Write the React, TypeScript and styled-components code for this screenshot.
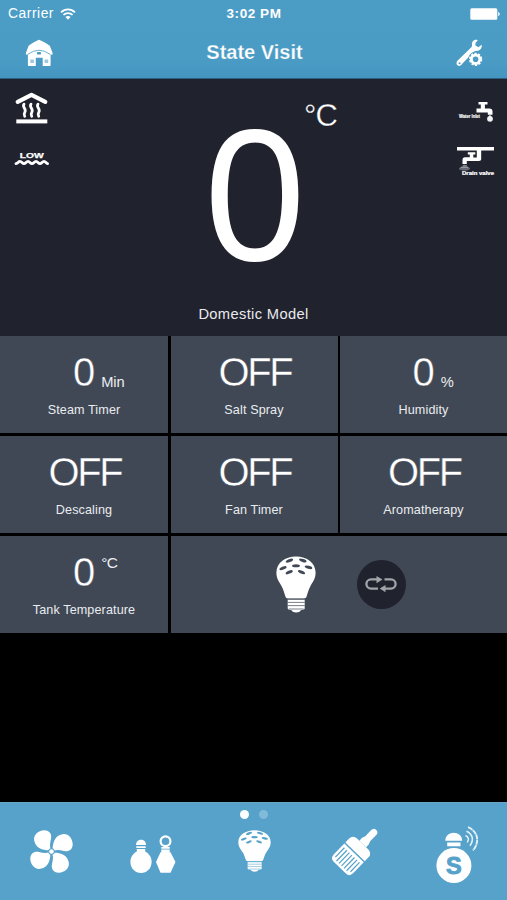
import React from 'react';
import styled, { createGlobalStyle } from 'styled-components';

const GlobalStyle = createGlobalStyle`
  * { box-sizing: border-box; }
  body {
    margin: 0;
    background: #000;
    color: #fff;
    font-family: "Liberation Sans", Arial, sans-serif;
  }
`;

const Screen = styled.div`
  width: 507px;
  height: 900px;
  display: flex;
  flex-direction: column;
  overflow: hidden;
  background: #000;
`;

const Header = styled.header`
  height: 79px;
  flex: none;
  background: linear-gradient(#4c9dc6 0%, #4b9cc5 75%, #4495c0 100%);
  border-bottom: 1px solid #2c5f80;
`;

const StatusBar = styled.div`
  height: 27px;
  display: grid;
  grid-template-columns: 1fr auto 1fr;
  align-items: center;
  padding: 0 7px 0 8px;
  font-size: 13.8px;
`;

const Carrier = styled.div`
  display: flex;
  align-items: center;
  gap: 6px;
  letter-spacing: 0.55px;
`;

const Clock = styled.div`
  font-weight: bold;
  font-size: 13.5px;
  letter-spacing: 0.55px;
`;

const BatterySlot = styled.div`
  display: flex;
  justify-content: flex-end;
`;

const NavBar = styled.nav`
  height: 51px;
  display: grid;
  grid-template-columns: 1fr auto 1fr;
  align-items: center;
  padding: 0 23px 0 25px;
`;

const Title = styled.h1`
  margin: -2px 0 0;
  font-size: 20px;
  line-height: 24px;
  font-weight: bold;
  letter-spacing: 0;
  -webkit-text-stroke: 0.25px #4b9cc5;
`;

const NavRight = styled.div`
  display: flex;
  justify-content: flex-end;
`;

const Icon = styled.svg`
  display: block;
  flex: none;
  overflow: visible;
`;

const Hero = styled.section`
  height: 256.5px;
  flex: none;
  display: grid;
  grid-template-columns: 60px 1fr 60px;
  background: #20222d;
`;

const IconColumn = styled.div<{ $right?: boolean }>`
  display: flex;
  flex-direction: column;
  align-items: ${(p) => (p.$right ? 'flex-end' : 'flex-start')};
  padding: ${(p) => (p.$right ? '22px 12px 0 0' : '14px 0 0 14px')};
  gap: ${(p) => (p.$right ? '23px' : '26px')};
`;

const Reading = styled.div`
  display: flex;
  flex-direction: column;
  align-items: center;
`;

const ReadingRow = styled.div`
  height: 212px;
  display: grid;
  grid-template-columns: 1fr auto 1fr;
  margin-top: 11px;
`;

const BigValue = styled.div`
  grid-column: 2;
  font-size: 187px;
  line-height: 212px;
  transform: translateX(2px) scaleX(0.97);
`;

const BigUnit = styled.div`
  font-size: 31px;
  line-height: 34px;
  padding-top: 9px;
  letter-spacing: -0.8px;
  transform: translateX(-1.5px);
  -webkit-text-stroke: 0.3px #20222d;
`;

const ModelName = styled.div`
  font-size: 14.7px;
  line-height: 20px;
  letter-spacing: 0.35px;
  margin-top: 2px;
  color: #e8eaed;
`;

const Tiles = styled.section`
  flex: none;
  display: grid;
  grid-template-columns: 168px 167px 167px;
  grid-template-rows: repeat(3, 97.5px);
  gap: 2.5px;
`;

const Tile = styled.div<{ $wide?: boolean }>`
  grid-column: ${(p) => (p.$wide ? 'span 2' : 'auto')};
  display: flex;
  flex-direction: ${(p) => (p.$wide ? 'row' : 'column')};
  align-items: center;
  padding: ${(p) => (p.$wide ? '0 0 0 105px' : '14px 0 0')};
  gap: ${(p) => (p.$wide ? '41px' : '6px')};
  background: #404855;
`;

const ValueRow = styled.div`
  width: 100%;
  height: 46px;
  display: grid;
  grid-template-columns: 1fr auto 1fr;
`;

const Value = styled.div<{ $word?: boolean }>`
  grid-column: 2;
  font-size: 40px;
  line-height: 45px;
  letter-spacing: ${(p) => (p.$word ? '-2.4px' : '0')};
  margin-right: ${(p) => (p.$word ? '-2px' : '0')};
  -webkit-text-stroke: 0.4px #404855;
`;

const Unit = styled.div<{ $raised?: boolean }>`
  align-self: ${(p) => (p.$raised ? 'start' : 'end')};
  padding: ${(p) => (p.$raised ? '4px 0 0 6px' : '0 0 5px 6px')};
  font-size: ${(p) => (p.$raised ? '15.5px' : '14.7px')};
  line-height: 18px;
  letter-spacing: ${(p) => (p.$raised ? '-0.5px' : '0')};
  color: #eceef1;
`;

const Label = styled.div`
  font-size: 12.6px;
  line-height: 16px;
  letter-spacing: 0.12px;
  color: #eaecef;
`;

const RoundButton = styled.button`
  width: 49px;
  height: 49px;
  padding: 0;
  border: 0;
  border-radius: 50%;
  background: #20222d;
  display: flex;
  align-items: center;
  justify-content: center;
`;

const TabBar = styled.footer`
  height: 98px;
  flex: none;
  margin-top: auto;
  background: #56a2ca;
  border-top: 1px solid #6aa5c4;
`;

const Pager = styled.div`
  height: 23px;
  display: flex;
  justify-content: center;
  align-items: center;
  gap: 10px;
`;

const Dot = styled.span<{ $active?: boolean }>`
  width: 9px;
  height: 9px;
  border-radius: 50%;
  background: ${(p) => (p.$active ? '#fff' : '#82bad9')};
`;

const Tabs = styled.div`
  display: grid;
  grid-template-columns: repeat(5, 101.4px);
  height: 62px;
`;

const Tab = styled.div<{ $top: number; $shift?: number }>`
  display: flex;
  justify-content: center;
  align-items: flex-start;
  padding-top: ${(p) => p.$top}px;
  padding-left: ${(p) => p.$shift ?? 0}px;
`;

const Wifi = () => (
  <Icon width="16" height="12" viewBox="0 0 16 12" fill="none" stroke="#fff" strokeWidth="1.7">
    <path d="M1 4.3C5 .3 11 .3 15 4.3M3.4 6.900c2.600-2.500 6.600-2.500 9.200 0" />
    <path d="M5.400 9c1.400-1.500 3.800-1.500 5.200 0L8 11.700z" fill="#fff" stroke="none" />
  </Icon>
);

const Battery = () => (
  <Icon width="30" height="12" viewBox="0 0 30 12" fill="#fff">
    <rect x=".3" y=".2" width="27" height="11.6" rx="1.5" />
    <path d="M28.2 4c2 .6 2 3.400 0 4z" />
  </Icon>
);

const House = () => (
  <Icon width="28" height="28" viewBox="0 0 28 28">
    <path
      fill="#fff"
      d="M14 .7c1 0 8.500 4.200 10.800 6L27.600 14v1.500l-2 .3v10.500c0 .4-.2.700-.6.700h-7.300v-8.300h-6.900V27H3.600c-.4 0-.7-.3-.7-.7V15.800l-2-.3V14L3.600 6.700C6 4.900 13 .7 14 .7z"
    />
    <path d="M2.500 15.500 Q8.500 11.300 14 11.200 Q19.500 11.300 25.500 15.500" fill="none" stroke="#4b9cc5" strokeWidth=".8" />
    <rect x="12" y="13" width="4" height="2.600" rx=".8" fill="#4b9cc5" />
    <path d="M5.300 20.500h3.600v3.600H5.300zM19.600 20.500h3.600v3.600h-3.600z" fill="#9dc9e0" />
  </Icon>
);

const Tools = () => (
  <Icon width="28" height="28" viewBox="0 0 28 28">
    <path
      fill="#fff"
      d="M21.800 1.200c-3.300-1.300-6.200 1.300-5.800 4.500.1 1.300-.1 2-.9 2.900L2 21.300c-3 2.400-.9 6.500 2 5.500 1-.3 1.500-.9 2-1.700L17.500 13c.8-.8 1.600-1 2.700-1 3.400.1 6-2.200 5.500-6.200L22.300 8.200 19.300 6.300 19.600 3.700z"
    />
    <circle cx="3.500" cy="24.300" r="1" fill="#4b9cc5" />
    <circle cx="19.600" cy="20.300" r="7.500" fill="#4b9cc5" />
    <circle cx="19.600" cy="20.300" r="4.200" fill="none" stroke="#fff" strokeWidth="2.800" />
    <circle cx="19.600" cy="20.300" r="5.800" fill="none" stroke="#fff" strokeWidth="1.700" strokeDasharray="2.200 1.444" />
  </Icon>
);

const Steam = () => (
  <Icon width="34" height="31" viewBox="0 0 34 31" fill="none" stroke="#fff">
    <path d="M3.700 8.900 17.500 1.900 31.300 8.900" strokeWidth="4.200" strokeLinecap="round" strokeLinejoin="round" />
    <path
      d="M10 11.200c-2.300 2.800 2.800 4.700.9 7.800-.9 1.500-1.200 2.600-.2 4.300M17 11.200c-2.300 2.800 2.800 4.700.9 7.800-.9 1.500-1.200 2.600-.2 4.300M24 11.200c-2.300 2.800 2.800 4.700.9 7.800-.9 1.500-1.200 2.600-.2 4.300"
      strokeWidth="2.800"
      strokeLinecap="round"
    />
    <path d="M4.300 28.400h27" strokeWidth="4" strokeLinecap="square" />
  </Icon>
);

const WaterLow = () => (
  <Icon width="36" height="16" viewBox="0 0 36 16">
    <text x="17.700" y="8" textAnchor="middle" textLength="24" lengthAdjust="spacingAndGlyphs" fontSize="7.500" fontWeight="bold" fill="#fff" stroke="#fff" strokeWidth=".25">
      LOW
    </text>
    <path
      d="M2 13.600c2-.2 2.200-2.200 4-2.200s2.200 2.300 4 2.300 2.200-2.300 4-2.300 2.200 2.300 4 2.300 2.200-2.300 4-2.300 2.200 2.300 4 2.300 2.200-2.300 4-2.300 2 2 3.600 2.200"
      fill="none"
      stroke="#fff"
      strokeWidth="2.800"
      strokeLinecap="round"
    />
  </Icon>
);

const WaterInlet = () => (
  <Icon width="36" height="22" viewBox="0 0 36 22">
    <text x="0" y="17.200" textLength="21" lengthAdjust="spacingAndGlyphs" fontSize="5.800" fontWeight="bold" fill="#fff" stroke="#fff" strokeWidth=".2">
      Water Inlet
    </text>
    <path d="M19.500 1h9v2.600h-2.600V7.500h4.300c2.300 0 3.300 1 3.300 3v3.200h-4.700v-2.200H17.500v-4h4.300V3.600h-2.300z" fill="#fff" />
    <circle cx="31" cy="17.800" r="2.900" fill="#f1f2f4" />
    <path d="M31 13.600l1.700 3h-3.400z" fill="#f1f2f4" />
  </Icon>
);

const DrainValve = () => (
  <Icon width="38" height="31" viewBox="0 0 38 31">
    <path d="M0 1h37v3.600H24.200V12.800c0 1.500-.8 2.200-2.200 2.200H9.800v3H5.500v-4c0-1.600.8-2.700 2.600-2.700h4.700V8.600h-2V6.200h7.500v2.400h-2v2.800h3.500V4.600H0z" fill="#fff" />
    <path d="M7.500 18.400 2 22c-.6 2 3 2.800 6 2.600 3-.1 5.500-1 5-2.600z" fill="#656872" />
    <path d="M4 21.500h7M6 19.800h4" stroke="#a4a6ac" strokeWidth=".8" />
    <text x="5" y="29.300" textLength="32" lengthAdjust="spacingAndGlyphs" fontSize="4.500" fontWeight="bold" fill="#fff" stroke="#fff" strokeWidth=".2">
      Drain valve
    </text>
  </Icon>
);

const Bulb = ({ width, height, cut }: { width: number; height: number; cut: string }) => (
  <Icon width={width} height={height} viewBox="0 0 40 57" preserveAspectRatio="none">
    <path
      fill="#fff"
      d="M20 .5C9 .5.400 7.200.4 16.500c0 6.500 2.800 9 5.600 14.500 1.700 3.500 2.500 6.500 3.400 9.500.4 1.200 1.200 2 2.600 2h16c1.400 0 2.200-.8 2.600-2 .9-3 1.700-6 3.400-9.500 2.800-5.500 5.600-8 5.600-14.500C39.600 7.200 31 .5 20 .5z"
    />
    <path fill="#fff" d="M11.700 43.500h17v9c0 1.200-2.700 1.300-3.900 1.800-.8 1.500-2.200 2.200-4.600 2.200s-3.800-.7-4.600-2.200c-1.200-.5-3.900-.6-3.900-1.800z" />
    <path d="M11.700 43.200h17M11.700 46.400h17M11.700 49.600h17M12.700 53h15" stroke={cut} strokeWidth=".7" />
    <g fill={cut}>
      <ellipse cx="13.400" cy="4.600" rx="3.900" ry="1.500" transform="rotate(-22 13.400 4.600)" />
      <ellipse cx="26.800" cy="4.500" rx="3.900" ry="1.500" transform="rotate(18 26.800 4.500)" />
      <ellipse cx="20" cy="9.700" rx="3.900" ry="1.500" />
      <ellipse cx="7" cy="12.200" rx="3.800" ry="1.500" transform="rotate(-22 7 12.200)" />
      <ellipse cx="32.500" cy="11.300" rx="3.900" ry="1.500" transform="rotate(14 32.500 11.300)" />
      <ellipse cx="13.200" cy="16.200" rx="3.800" ry="1.500" transform="rotate(-24 13.200 16.200)" />
      <ellipse cx="25.500" cy="16.100" rx="3.800" ry="1.500" transform="rotate(24 25.500 16.100)" />
    </g>
  </Icon>
);

const Swap = () => (
  <Icon width="32" height="16" viewBox="0 0 32 16" fill="none" stroke="#a2a4aa" strokeWidth="2.300">
    <path d="M13 12.600H6A4.600 4.600 0 0 1 6 3.400h7M19.500 3.400H26a4.600 4.600 0 0 1 0 9.200h-7" />
    <path d="M11.500 0 17.500 3.600 11.500 7.200zM20.500 9 14.700 12.600 20.500 16.200z" fill="#a2a4aa" stroke="none" />
  </Icon>
);

const Fan = () => {
  const blade =
    'M19.500 20.300C13.500 20.500 5.500 18.500 4.200 10.500C3.300 4.500 8.500 .6 14 .3C20 .2 22 4.700 21 9C20 13 19.500 16.500 20.700 19z';
  return (
    <Icon width="43" height="43" viewBox="0 0 43 43" fill="#fff">
      {[0, 90, 180, 270].map((angle) => (
        <path key={angle} d={blade} transform={`rotate(${angle} 21.500 21.500)`} />
      ))}
      <circle cx="21.500" cy="21.500" r="3.200" fill="#56a2ca" />
      <circle cx="21.500" cy="21.500" r="2.300" />
    </Icon>
  );
};

const Bottles = () => (
  <Icon width="46" height="39" viewBox="0 0 46 39" fill="#fff">
    <path d="M6 6.500C6-.5 16-.5 16 6.500z" transform="translate(0 3.600)" />
    <path d="M6.300 11.200h9.400v1.800H6.300zM6.800 14h8.400v3H6.800z" />
    <ellipse cx="11" cy="26.900" rx="10.600" ry="11.100" />
    <circle cx="35.500" cy="6.300" r="4.900" fill="none" stroke="#fff" strokeWidth="2.200" />
    <path d="M31.300 12h8.400v1.800h-8.400zM31.300 14.600h8.400v2.600h-8.400zM30.500 17.200h10l5 9.800-5 10.700h-10L26 27z" />
  </Icon>
);

const Brush = () => (
  <Icon width="50" height="47" viewBox="0 0 50 47">
    <g transform="translate(22 26) rotate(44)" fill="#fff">
      <path d="M-13.500-1.500h27v15q0 5.500-5 5.500h-17q-5 0-5-5.500z" />
      <path d="M-13.500-3V-8q0-6 6-6h15q6 0 6 6v5z" />
      <path d="M-3.200-14v-4l1.200-3v-8.500q0-4 3.500-4t3.500 4v8.500l1.200 3v4z" transform="translate(-1.500 0)" />
      <path d="M-10.500 1.500v13M-7 1.500v15M-3.500 1.500v15M0 1.500v15M3.500 1.500v15M7 1.500v15M10.500 1.500v13" stroke="#56a2ca" strokeWidth="1.200" />
    </g>
  </Icon>
);

const SaltSpray = () => (
  <Icon width="43" height="58" viewBox="0 0 43 58">
    <path d="M9.300 14.800C9.300 4 26.200 4 26.200 14.800zM11.200 16.600h13.300v3.700H11.200z" fill="#fff" />
    <circle cx="17.900" cy="39.500" r="17.500" fill="#fff" />
    <text x="17.900" y="47.800" textAnchor="middle" fontSize="23.500" fontWeight="bold" fill="#56a2ca" stroke="#56a2ca" strokeWidth=".9">
      S
    </text>
    <g fill="none" stroke="#e4f2f9">
      <path d="M29.500 9.500c3.300 1.500 3.700 3.700 1.800 7" strokeWidth="1.500" />
      <path d="M30.500 5.200c6.500 3 7.500 8.800 3.500 14.500" strokeWidth="1.600" />
      <path d="M32 1.200c9.700 3.800 12.300 14.500 5 23.300" strokeWidth="1.900" strokeDasharray="5 .5" />
    </g>
  </Icon>
);

type Metric = { label: string; value: string; unit?: string; raised?: boolean };

const metrics: Metric[] = [
  { label: 'Steam Timer', value: '0', unit: 'Min' },
  { label: 'Salt Spray', value: 'OFF' },
  { label: 'Humidity', value: '0', unit: '%' },
  { label: 'Descaling', value: 'OFF' },
  { label: 'Fan Timer', value: 'OFF' },
  { label: 'Aromatherapy', value: 'OFF' },
  { label: 'Tank Temperature', value: '0', unit: '°C', raised: true },
];

export default function App() {
  return (
    <>
      <GlobalStyle />
      <Screen>
        <Header>
          <StatusBar>
            <Carrier>
              Carrier
              <Wifi />
            </Carrier>
            <Clock>3:02 PM</Clock>
            <BatterySlot>
              <Battery />
            </BatterySlot>
          </StatusBar>
          <NavBar>
            <House />
            <Title>State Visit</Title>
            <NavRight>
              <Tools />
            </NavRight>
          </NavBar>
        </Header>
        <Hero>
          <IconColumn>
            <Steam />
            <WaterLow />
          </IconColumn>
          <Reading>
            <ReadingRow>
              <BigValue>0</BigValue>
              <BigUnit>°C</BigUnit>
            </ReadingRow>
            <ModelName>Domestic Model</ModelName>
          </Reading>
          <IconColumn $right>
            <WaterInlet />
            <DrainValve />
          </IconColumn>
        </Hero>
        <Tiles>
          {metrics.map((m) => (
            <Tile key={m.label}>
              <ValueRow>
                <Value $word={m.value === 'OFF'}>{m.value}</Value>
                {m.unit && <Unit $raised={m.raised}>{m.unit}</Unit>}
              </ValueRow>
              <Label>{m.label}</Label>
            </Tile>
          ))}
          <Tile $wide>
            <Bulb width={40} height={57} cut="#404855" />
            <RoundButton aria-label="Cycle light">
              <Swap />
            </RoundButton>
          </Tile>
        </Tiles>
        <TabBar>
          <Pager>
            <Dot $active />
            <Dot />
          </Pager>
          <Tabs>
            <Tab $top={4} $shift={1}>
              <Fan />
            </Tab>
            <Tab $top={9} $shift={2}>
              <Bottles />
            </Tab>
            <Tab $top={4} $shift={2}>
              <Bulb width={33} height={42} cut="#56a2ca" />
            </Tab>
            <Tab $top={2} $shift={2}>
              <Brush />
            </Tab>
            <Tab $top={-4} $shift={2}>
              <SaltSpray />
            </Tab>
          </Tabs>
        </TabBar>
      </Screen>
    </>
  );
}
